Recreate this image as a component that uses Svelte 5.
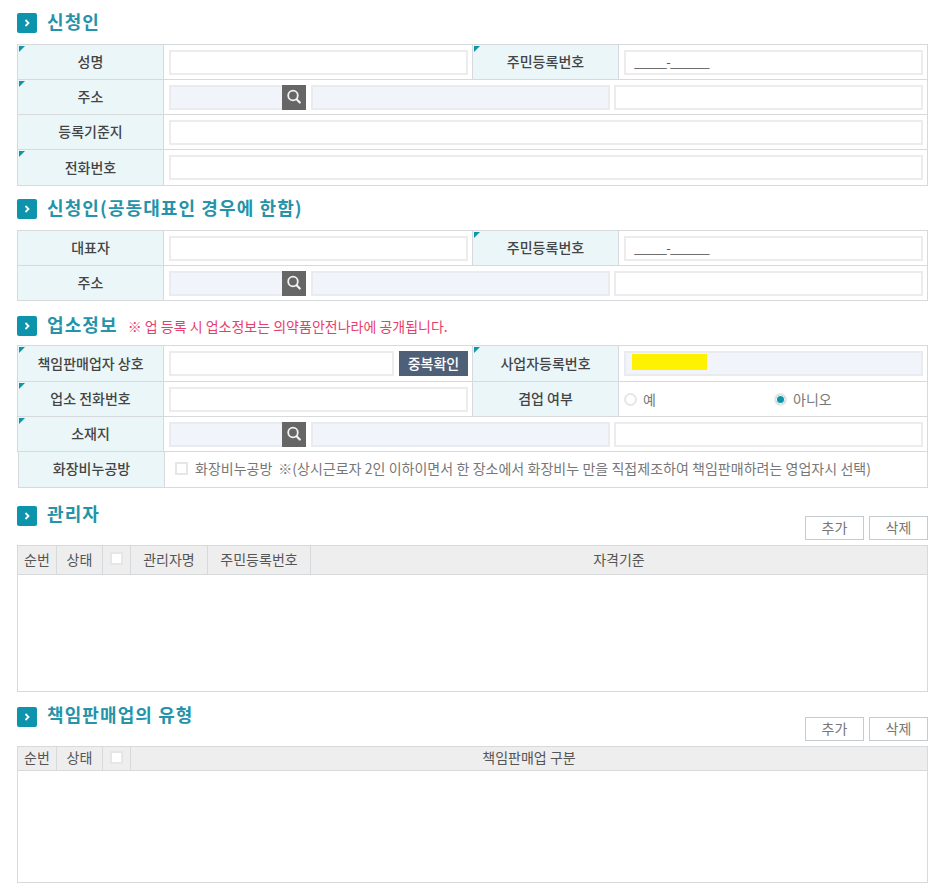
<script>
  // Business registration form: applicant, co-representative, shop info, managers, sale types.
  let noshop = $state(false);
  let side = $state('no');
</script>

{#snippet head(title, note)}
  <h2 class="head">
    <span class="mark">
      <svg viewBox="0 0 20 20" width="20" height="20" aria-hidden="true">
        <path d="M8.5 7l3 3-3 3" fill="none" stroke="#fff" stroke-width="1.8"/>
      </svg>
    </span>
    <span class="head-text">{title}</span>
    {#if note}<span class="note">{note}</span>{/if}
  </h2>
{/snippet}

{#snippet address()}
  <div class="addr">
    <input class="zip ro" readonly />
    <button class="find" aria-label="주소 검색">
      <svg viewBox="0 0 24 24" width="24" height="24" aria-hidden="true">
        <circle cx="11" cy="10.5" r="4.8" fill="none" stroke="#f2f2f2" stroke-width="1.8"/>
        <path d="M14.6 14.2l3.2 3.3" stroke="#f2f2f2" stroke-width="2.2" stroke-linecap="round"/>
      </svg>
    </button>
    <input class="road ro" readonly />
    <input class="rest" />
  </div>
{/snippet}

{#snippet listTop(title)}
  <div class="list-top">
    {@render head(title)}
    <div class="btns">
      <button class="line">추가</button>
      <button class="line">삭제</button>
    </div>
  </div>
{/snippet}

<main class="page">
  {@render head('신청인')}
  <table class="form first">
    <colgroup><col class="c1" /><col class="c2" /><col class="c3" /><col /></colgroup>
    <tbody>
      <tr>
        <th class="req">성명</th><td><input /></td>
        <th class="req">주민등록번호</th><td><input class="rrn" value="_____-______" /></td>
      </tr>
      <tr><th class="req">주소</th><td colspan="3">{@render address()}</td></tr>
      <tr><th>등록기준지</th><td colspan="3"><input /></td></tr>
      <tr class="tall"><th class="req">전화번호</th><td colspan="3"><input /></td></tr>
    </tbody>
  </table>

  {@render head('신청인(공동대표인 경우에 한함)')}
  <table class="form">
    <colgroup><col class="c1" /><col class="c2" /><col class="c3" /><col /></colgroup>
    <tbody>
      <tr>
        <th>대표자</th><td><input /></td>
        <th class="req">주민등록번호</th><td><input class="rrn" value="_____-______" /></td>
      </tr>
      <tr><th>주소</th><td colspan="3">{@render address()}</td></tr>
    </tbody>
  </table>

  {@render head('업소정보', '※ 업 등록 시 업소정보는 의약품안전나라에 공개됩니다.')}
  <table class="form shop">
    <colgroup><col class="c1" /><col class="c2" /><col class="c3" /><col /></colgroup>
    <tbody>
      <tr class="tall">
        <th class="req">책임판매업자 상호</th>
        <td>
          <div class="dup">
            <input />
            <button class="solid">중복확인</button>
          </div>
        </td>
        <th class="req">사업자등록번호</th>
        <td>
          <div class="biz">
            <input class="ro" readonly />
            <span class="mask"></span>
          </div>
        </td>
      </tr>
      <tr>
        <th class="req">업소 전화번호</th><td><input /></td>
        <th>겸업 여부</th>
        <td>
          <div class="radios">
            <label><input type="radio" bind:group={side} value="yes" /><i></i>예</label>
            <label><input type="radio" bind:group={side} value="no" /><i></i>아니오</label>
          </div>
        </td>
      </tr>
      <tr><th class="req">소재지</th><td colspan="3">{@render address()}</td></tr>
    </tbody>
  </table>
  <table class="form tail">
    <colgroup><col class="c1" /><col /></colgroup>
    <tbody>
      <tr>
        <th>화장비누공방</th>
        <td>
          <label class="check">
            <input type="checkbox" bind:checked={noshop} /><i></i>
            <span>화장비누공방</span>
            <span class="hint">※(상시근로자 2인 이하이면서 한 장소에서 화장비누 만을 직접제조하여 책임판매하려는 영업자시 선택)</span>
          </label>
        </td>
      </tr>
    </tbody>
  </table>

  {@render listTop('관리자')}
  <table class="grid mgr">
    <colgroup>
      <col class="g1" /><col class="g2" /><col class="g3" /><col class="g4" /><col class="g5" /><col />
    </colgroup>
    <thead>
      <tr>
        <th>순번</th><th>상태</th><th><span class="box"></span></th>
        <th>관리자명</th><th>주민등록번호</th><th>자격기준</th>
      </tr>
    </thead>
    <tbody><tr><td colspan="6"></td></tr></tbody>
  </table>

  {@render listTop('책임판매업의 유형')}
  <table class="grid kind">
    <colgroup><col class="g1" /><col class="g2" /><col class="g3" /><col /></colgroup>
    <thead>
      <tr><th>순번</th><th>상태</th><th><span class="box"></span></th><th>책임판매업 구분</th></tr>
    </thead>
    <tbody><tr><td colspan="4"></td></tr></tbody>
  </table>
</main>

<style>
  :global(body) {
    margin: 0;
    background: #fff;
    font-family: "Noto Sans CJK KR", "Noto Sans", sans-serif;
    color: #444;
  }
  .page {
    box-sizing: border-box;
    width: 936px;
    height: 892px;
    padding: 13px 8px 0 17px;
    overflow: hidden;
  }
  .head {
    display: flex;
    align-items: center;
    gap: 10px;
    height: 20px;
    margin: 0 0 11px;
    font-size: 18px;
    font-weight: 700;
    color: #2593a9;
  }
  .head-text {
    padding-bottom: 5px;
    letter-spacing: 1.1px;
  }
  .mark {
    display: block;
    width: 20px;
    height: 20px;
    border-radius: 2px;
    background: #0d93ac;
  }
  .mark svg { display: block; }
  .note {
    font-size: 14px;
    font-weight: 400;
    color: #e83e6c;
  }

  table {
    width: 911px;
    table-layout: fixed;
    border-collapse: collapse;
  }
  .c1 { width: 146px; }
  .c2 { width: 309px; }
  .c3 { width: 146px; }

  .form { margin-bottom: 15px; }
  .first { margin-bottom: 13px; }
  .shop { margin-top: -2px; }
  .form th, .form td {
    height: 35px;
    box-sizing: border-box;
    padding: 0 4px 0 5px;
    border: 1px solid #d6dadc;
    font-size: 14px;
  }
  .form .tall th, .form .tall td { height: 36px; }
  .form th {
    position: relative;
    padding: 0 0 2px;
    background: #eaf6f8;
    font-weight: 500;
    color: #444;
  }
  .form th.req::before {
    content: "";
    position: absolute;
    top: 1px;
    left: 1px;
    border-top: 6px solid #0e96a8;
    border-right: 6px solid transparent;
  }
  .form:has(+ .tail) { margin-bottom: 0; }
  .tail {
    width: 910px;
    margin-left: 1px;
    margin-bottom: 18px;
  }
  .tail th, .tail td { border-top: 0; }
  .tail td { padding-left: 10px; padding-bottom: 2px; }

  input {
    display: block;
    box-sizing: border-box;
    width: 100%;
    height: 25px;
    margin: 0;
    padding: 0 8px 2px;
    border: 2px solid #ececec;
    border-radius: 0;
    outline: none;
    background: #fff;
    color: #555;
    font: 13px "Noto Sans CJK KR", "Noto Sans", sans-serif;
  }
  input.ro {
    border-color: #e9ebee;
    background: #f1f5fb;
  }
  .rrn { padding-bottom: 1px; letter-spacing: -0.8px; }

  .addr { display: flex; align-items: stretch; }
  .zip { flex: 0 0 113px; border-right: 0; }
  .find {
    flex: 0 0 24px;
    height: 25px;
    padding: 0;
    border: 0;
    background: #666;
  }
  .find svg { display: block; }
  .road { flex: 0 0 299px; margin-left: 5px; }
  .rest { flex: 1; margin-left: 4px; }

  .dup { display: flex; gap: 5px; }
  .dup input { flex: 1; }
  .solid {
    flex: 0 0 69px;
    height: 25px;
    padding: 0 0 2px;
    border: 0;
    background: #4e5f78;
    color: #fff;
    font: 500 14px "Noto Sans CJK KR", "Noto Sans", sans-serif;
  }
  .biz { position: relative; }
  .mask {
    position: absolute;
    top: 3px;
    left: 8px;
    width: 75px;
    height: 16px;
    background: #fff200;
  }

  .radios { display: flex; }
  .radios label, .check {
    display: flex;
    align-items: center;
    color: #777;
    font-size: 14px;
  }
  .radios label { flex: 0 0 150px; gap: 6px; }
  .radios input, .check input {
    position: absolute;
    width: 0;
    height: 0;
    opacity: 0;
  }
  .radios i {
    box-sizing: border-box;
    width: 13px;
    height: 13px;
    border: 2px solid #e6e6e6;
    border-radius: 50%;
    background: #fff;
  }
  .radios input:checked + i {
    background: #0e96a8;
    box-shadow: inset 0 0 0 1px #fff;
  }
  .check { gap: 7px; }
  .check i {
    box-sizing: border-box;
    width: 13px;
    height: 13px;
    border: 2px solid #e6e6e6;
    background: #fff;
  }
  .hint { margin-left: -1px; word-spacing: 0.2px; }

  .list-top {
    display: flex;
    justify-content: space-between;
    height: 34px;
    margin-bottom: 5px;
  }
  .list-top .head { margin: 0; }
  .btns {
    display: flex;
    gap: 5px;
    margin-top: 10px;
  }
  .line {
    box-sizing: border-box;
    width: 59px;
    height: 24px;
    padding: 0 0 2px;
    border: 1px solid #c4ccd2;
    background: #fff;
    color: #777;
    font: 14px "Noto Sans CJK KR", "Noto Sans", sans-serif;
  }

  .g1 { width: 39px; }
  .g2 { width: 46px; }
  .g3 { width: 28px; }
  .g4 { width: 77px; }
  .g5 { width: 103px; }
  .grid { margin-bottom: 15px; }
  .grid th, .grid td {
    box-sizing: border-box;
    padding: 0;
    border: 1px solid #d6dadc;
  }
  .grid th {
    padding-bottom: 2px;
    background: #eee;
    color: #555;
    font-size: 14px;
    font-weight: 400;
  }
  .mgr th { height: 29px; }
  .mgr td { height: 117px; }
  .kind th { height: 24px; }
  .kind td { height: 112px; }
  .box {
    display: block;
    box-sizing: border-box;
    width: 13px;
    height: 13px;
    margin: 0 auto;
    border: 2px solid #e6e6e6;
    background: #fff;
  }
</style>
